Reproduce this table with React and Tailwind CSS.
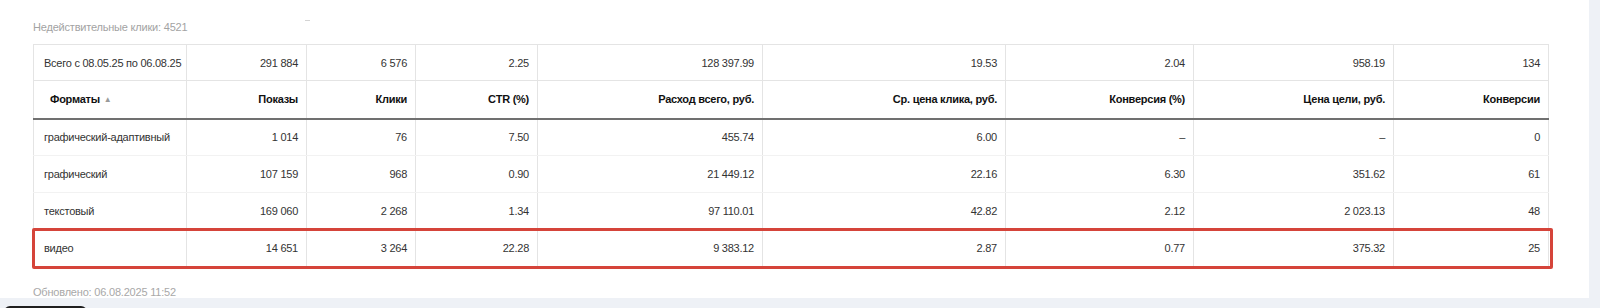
import React from "react";

const cols = [153, 120, 109, 122, 225, 243, 188, 200, 155];

const total = ["Всего с 08.05.25 по 06.08.25", "291 884", "6 576", "2.25", "128 397.99", "19.53", "2.04", "958.19", "134"];
const headers = ["Форматы", "Показы", "Клики", "CTR (%)", "Расход всего, руб.", "Ср. цена клика, руб.", "Конверсия (%)", "Цена цели, руб.", "Конверсии"];
const rows = [
  ["графический-адаптивный", "1 014", "76", "7.50", "455.74", "6.00", "–", "–", "0"],
  ["графический", "107 159", "968", "0.90", "21 449.12", "22.16", "6.30", "351.62", "61"],
  ["текстовый", "169 060", "2 268", "1.34", "97 110.01", "42.82", "2.12", "2 023.13", "48"],
  ["видео", "14 651", "3 264", "22.28", "9 383.12", "2.87", "0.77", "375.32", "25"],
];

export default function App() {
  return (
    <div className="h-[308px] bg-[#eef1f6] font-['Liberation_Sans',Arial,sans-serif] overflow-hidden">
      <div className="relative w-[1589px] h-[298px] bg-white px-[33px]">
        <div className="absolute left-[305px] top-[20px] w-[5px] h-px bg-[#d4d4d4]" />
        <div className="h-[44px] pt-[20px] text-[11px] leading-[14px] text-[#a3a3a3] tracking-[-0.2px] whitespace-nowrap">
          Недействительные клики: 4521
        </div>
        <table className="table-fixed border-collapse text-[11px] leading-[14px] tracking-[-0.25px] text-[#333] whitespace-nowrap">
          <colgroup>
            {cols.map((w, i) => (
              <col key={i} style={{ width: w }} />
            ))}
          </colgroup>
          <tbody>
            <tr className="h-[36px]">
              {total.map((t, i) => (
                <td
                  key={i}
                  className={
                    "border border-[#e4e4e4] p-0 " +
                    (i === 0 ? "text-left pl-[10px]" : "text-right pr-[8px]")
                  }
                >
                  {t}
                </td>
              ))}
            </tr>
            <tr className="h-[38px]">
              {headers.map((t, i) => (
                <td
                  key={i}
                  className={
                    "border-x border-t border-[#e4e4e4] border-b-2 border-b-[#707070] p-0 font-bold text-[#111] " +
                    (i === 0 ? "text-left pl-[16px]" : "text-right pr-[8px]")
                  }
                >
                  {t}
                  {i === 0 && <span className="ml-[4px] text-[8px] text-[#9a9a9a] align-[1px]">▲</span>}
                </td>
              ))}
            </tr>
            {rows.map((r, ri) => (
              <tr key={ri} className="h-[37px]">
                {r.map((t, i) => (
                  <td
                    key={i}
                    className={
                      "border-x border-x-[#e4e4e4] border-b border-b-[#f2f2f2] p-0 " +
                      (i === 0 ? "text-left pl-[10px]" : "text-right pr-[8px]")
                    }
                  >
                    {t}
                  </td>
                ))}
              </tr>
            ))}
          </tbody>
        </table>
        <div className="mt-[18px] text-[11px] leading-[14px] text-[#a8a8a8] tracking-[-0.2px] whitespace-nowrap">
          Обновлено: 06.08.2025 11:52
        </div>
        <div className="absolute left-[32px] top-[228px] w-[1521px] h-[41px] border-[3px] border-[#d5443a] rounded-[2px]" />
      </div>
      <div className="ml-[4px] mt-[8px] w-[83px] h-[20px] rounded-t-[6px] bg-[#1f1f1f]" />
    </div>
  );
}
